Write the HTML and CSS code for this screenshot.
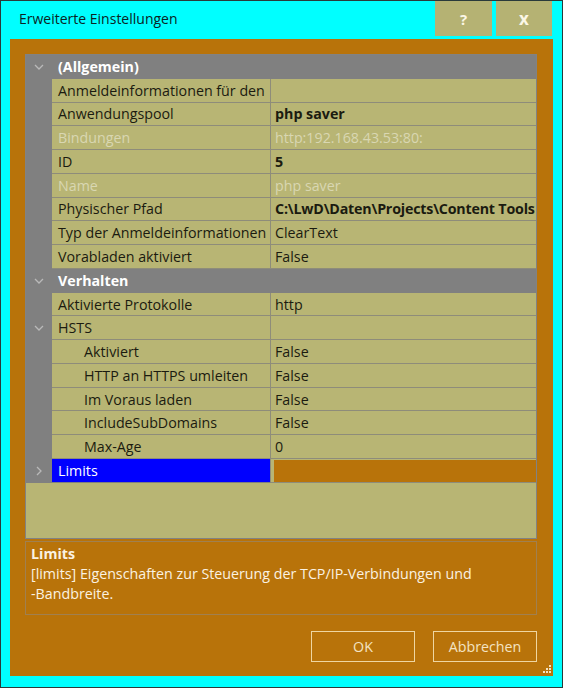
FILE: index.html
```html
<!DOCTYPE html>
<html lang="de">
<head>
<meta charset="utf-8">
<title>Erweiterte Einstellungen</title>
<link rel="stylesheet" href="styles.css">
</head>
<body>
<div class="window">
  <div class="titlebar">
    <div class="title">Erweiterte Einstellungen</div>
    <div class="tbtns">
      <div class="tbtn">?</div>
      <div class="tbtn close">x</div>
    </div>
  </div>
  <div class="client">
    <div class="grid">
      <div class="row cat">
        <span class="gutter"><svg class="chev" width="10" height="6" viewBox="0 0 10 6"><path d="M1 1 L5 5 L9 1" fill="none" stroke="#b9b9b9" stroke-width="1.3"/></svg></span>
        <span class="catname">(Allgemein)</span>
      </div>
      <div class="row"><span class="gutter"></span><span class="name">Anmeldeinformationen für den</span><span class="value"></span></div>
      <div class="row"><span class="gutter"></span><span class="name">Anwendungspool</span><span class="value bold">php saver</span></div>
      <div class="row dis"><span class="gutter"></span><span class="name">Bindungen</span><span class="value">http:192.168.43.53:80:</span></div>
      <div class="row"><span class="gutter"></span><span class="name">ID</span><span class="value bold">5</span></div>
      <div class="row dis"><span class="gutter"></span><span class="name">Name</span><span class="value">php saver</span></div>
      <div class="row"><span class="gutter"></span><span class="name">Physischer Pfad</span><span class="value bold path">C:\LwD\Daten\Projects\Content Tools</span></div>
      <div class="row"><span class="gutter"></span><span class="name">Typ der Anmeldeinformationen</span><span class="value">ClearText</span></div>
      <div class="row"><span class="gutter"></span><span class="name">Vorabladen aktiviert</span><span class="value">False</span></div>
      <div class="row cat">
        <span class="gutter"><svg class="chev" width="10" height="6" viewBox="0 0 10 6"><path d="M1 1 L5 5 L9 1" fill="none" stroke="#b9b9b9" stroke-width="1.3"/></svg></span>
        <span class="catname">Verhalten</span>
      </div>
      <div class="row"><span class="gutter"></span><span class="name">Aktivierte Protokolle</span><span class="value">http</span></div>
      <div class="row"><span class="gutter"><svg class="chev" width="10" height="6" viewBox="0 0 10 6"><path d="M1 1 L5 5 L9 1" fill="none" stroke="#b9b9b9" stroke-width="1.3"/></svg></span><span class="name">HSTS</span><span class="value"></span></div>
      <div class="row sub"><span class="gutter"></span><span class="name">Aktiviert</span><span class="value">False</span></div>
      <div class="row sub"><span class="gutter"></span><span class="name">HTTP an HTTPS umleiten</span><span class="value">False</span></div>
      <div class="row sub"><span class="gutter"></span><span class="name">Im Voraus laden</span><span class="value">False</span></div>
      <div class="row sub"><span class="gutter"></span><span class="name">IncludeSubDomains</span><span class="value">False</span></div>
      <div class="row sub"><span class="gutter"></span><span class="name">Max-Age</span><span class="value">0</span></div>
      <div class="row sel"><span class="gutter"><svg class="chev" width="6" height="10" viewBox="0 0 6 10"><path d="M1 1 L5 5 L1 9" fill="none" stroke="#b9b9b9" stroke-width="1.3"/></svg></span><span class="name">Limits</span><span class="value"><span class="selval"></span></span></div>
      <div class="filler"></div>
    </div>
    <div class="desc">
      <div class="dtitle">Limits</div>
      <div class="dtext">[limits] Eigenschaften zur Steuerung der TCP/IP-Verbindungen und<br>-Bandbreite.</div>
    </div>
    <div class="buttons">
      <div class="btn">OK</div>
      <div class="btn">Abbrechen</div>
    </div>
  </div>
  <svg class="grip" width="8" height="8" viewBox="0 0 8 8">
    <rect x="6" y="0" width="2" height="2" fill="#f2e2c0"/>
    <rect x="3" y="3" width="2" height="2" fill="#f2e2c0"/>
    <rect x="6" y="3" width="2" height="2" fill="#f2e2c0"/>
    <rect x="0" y="6" width="2" height="2" fill="#f2e2c0"/>
    <rect x="3" y="6" width="2" height="2" fill="#f2e2c0"/>
    <rect x="6" y="6" width="2" height="2" fill="#f2e2c0"/>
  </svg>
</div>
</body>
</html>
```

FILE: styles.css
```css
* { box-sizing: border-box; }
html, body { margin: 0; padding: 0; }
body {
  width: 563px;
  height: 688px;
  font-family: "Open Sans", "Noto Sans", sans-serif;
  font-size: 14.25px;
  color: #1b1b10;
}
.window {
  position: relative;
  width: 563px;
  height: 688px;
  background: #00ffff;
  border: 1px solid #2a3a3a;
  display: flex;
  flex-direction: column;
}
.titlebar {
  height: 38px;
  display: flex;
  justify-content: space-between;
  align-items: flex-start;
  padding-right: 10px;
}
.title {
  padding-left: 18px;
  line-height: 36px;
  font-size: 14px;
  color: #0b2424;
}
.tbtns { display: flex; gap: 4px; }
.tbtn {
  width: 57px;
  height: 35px;
  background: #b5b273;
  color: #fbf7e6;
  font-weight: bold;
  font-size: 15px;
  display: flex;
  align-items: center;
  justify-content: center;
}
.tbtn.close { width: 56px; font-size: 17px; }
.client {
  flex: 1;
  margin: 0 9px 11px 9px;
  background: #b8730a;
  padding: 15px 16px 0 15px;
  display: flex;
  flex-direction: column;
}
.grid {
  height: 485px;
  background: #b8b574;
  border: 1px solid #828282;
  display: flex;
  flex-direction: column;
  overflow: hidden;
}
.row {
  height: 23.78px;
  flex: none;
  display: flex;
  align-items: stretch;
  white-space: nowrap;
}
.gutter {
  width: 26px;
  flex: none;
  background: #808080;
  display: flex;
  align-items: center;
  justify-content: center;
}
.name {
  width: 219px;
  flex: none;
  padding-left: 6px;
  border-right: 1px solid #8e8c7a;
  border-bottom: 1px solid #8e8c7a;
  overflow: hidden;
  display: flex;
  align-items: center;
}
.value {
  flex: 1;
  padding-left: 4px;
  border-bottom: 1px solid #8e8c7a;
  overflow: hidden;
  display: flex;
  align-items: center;
}
.bold { font-weight: bold; }
.path { letter-spacing: -0.2px; }
.dis .name, .dis .value { color: #d9d7b2; }
.sub .name { padding-left: 32px; }
.cat { background: #808080; }
.catname {
  padding-left: 6px;
  color: #ffffff;
  font-weight: bold;
  display: flex;
  align-items: center;
}
.sel .name {
  background: #0000ff;
  color: #ffffff;
  border-bottom-color: #808080;
}
.sel .value { padding-left: 3px; padding-top: 1px; padding-bottom: 0; align-items: stretch; }
.selval { flex: 1; background: #b8730a; }
.filler { flex: 1; }
.desc {
  margin-top: 2px;
  height: 74px;
  border: 1px solid #a08050;
  padding: 2px 5px;
  color: #fbf2e2;
}
.dtitle { font-weight: bold; line-height: 20px; }
.dtext { line-height: 20px; }
.buttons {
  margin-top: 16px;
  display: flex;
  justify-content: flex-end;
  gap: 18px;
}
.btn {
  width: 104px;
  height: 31px;
  border: 1px solid #efd6a2;
  color: #f4e3c2;
  display: flex;
  align-items: center;
  justify-content: center;
}
.grip {
  position: absolute;
  right: 11px;
  bottom: 14px;
}
```
